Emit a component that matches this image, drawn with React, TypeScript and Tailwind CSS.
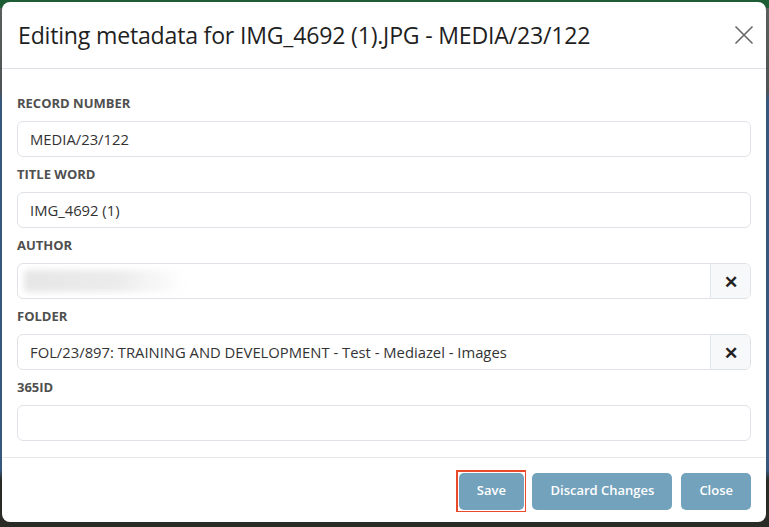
const font = "font-['Open_Sans','Noto_Sans',sans-serif]"

function Label({ children }: { children: string }) {
  return (
    <div className="text-[13px] font-bold text-[#4f4f4f] leading-[18px] mb-[9px]">{children}</div>
  )
}

function Field({ label, value, clearable, blurred }: { label: string; value?: string; clearable?: boolean; blurred?: boolean }) {
  return (
    <div className="mb-[8px]">
      <Label>{label}</Label>
      <div className="flex h-[36px] rounded-[6px] border border-[#dfe3e7] overflow-hidden">
        <div className="flex-1 flex items-center px-[12px] text-[14.8px] text-[#333] relative">
          {blurred ? (
            <div className="absolute left-[6px] top-[6px] h-[22px] w-[160px] rounded bg-[linear-gradient(90deg,#e6e6e6_0%,#ececec_60%,rgba(255,255,255,0)_100%)] blur-[3px]" />
          ) : (
            value
          )}
        </div>
        {clearable && (
          <div className="w-[40px] flex items-center justify-center border-l border-[#e3e6ea] bg-[#f7f8f9] text-[#222]">
            <span className="text-[17px] font-bold leading-none">✕</span>
          </div>
        )}
      </div>
    </div>
  )
}

const btn = 'h-[37px] px-[18px] rounded-[5px] bg-[#73a2bc] text-white text-[13px] font-semibold'

export default function App() {
  return (
    <div className={`${font} w-[769px] h-[527px] overflow-hidden bg-[linear-gradient(180deg,#1e5c35_0px,#1e5c35_8px,#5a5f5e_8px,#4e5355_90px,#37587c_100px,#37587c_470px,#2a2b24_480px)] pt-[2px] pl-[2px] pr-[3px]`}>
      <div className="bg-white rounded-[8px] h-[520px] flex flex-col">
        <div className="flex items-center justify-between h-[67px] pl-[16px] pr-[13px] border-b border-[#dee2e6]">
          <h5 className="text-[23.1px] text-[#1f1f1f] tracking-[-0.2px]">Editing metadata for IMG_4692 (1).JPG - MEDIA/23/122</h5>
          <svg width="18" height="18" viewBox="0 0 18 18" className="mt-[-1px]">
            <path d="M1 1L17 17M17 1L1 17" stroke="#6b6b6b" strokeWidth="1.7" strokeLinecap="round" />
          </svg>
        </div>
        <div className="px-[15px] pt-[25px] pb-[8px] border-b border-[#e6e8ea]">
          <Field label="RECORD NUMBER" value="MEDIA/23/122" />
          <Field label="TITLE WORD" value="IMG_4692 (1)" />
          <Field label="AUTHOR" clearable blurred />
          <Field label="FOLDER" value="FOL/23/897: TRAINING AND DEVELOPMENT - Test - Mediazel - Images" clearable />
          <Field label="365ID" value="" />
        </div>
        <div className="flex-1 flex items-center justify-end px-[15px] pt-[2px]">
          <div className="bg-[#ea4a2c] p-[1.5px] mr-[6px] flex">
            <div className="bg-white p-px flex">
              <button className={btn}>Save</button>
            </div>
          </div>
          <button className={btn}>Discard Changes</button>
          <button className={`${btn} ml-[9px]`}>Close</button>
        </div>
      </div>
    </div>
  )
}
